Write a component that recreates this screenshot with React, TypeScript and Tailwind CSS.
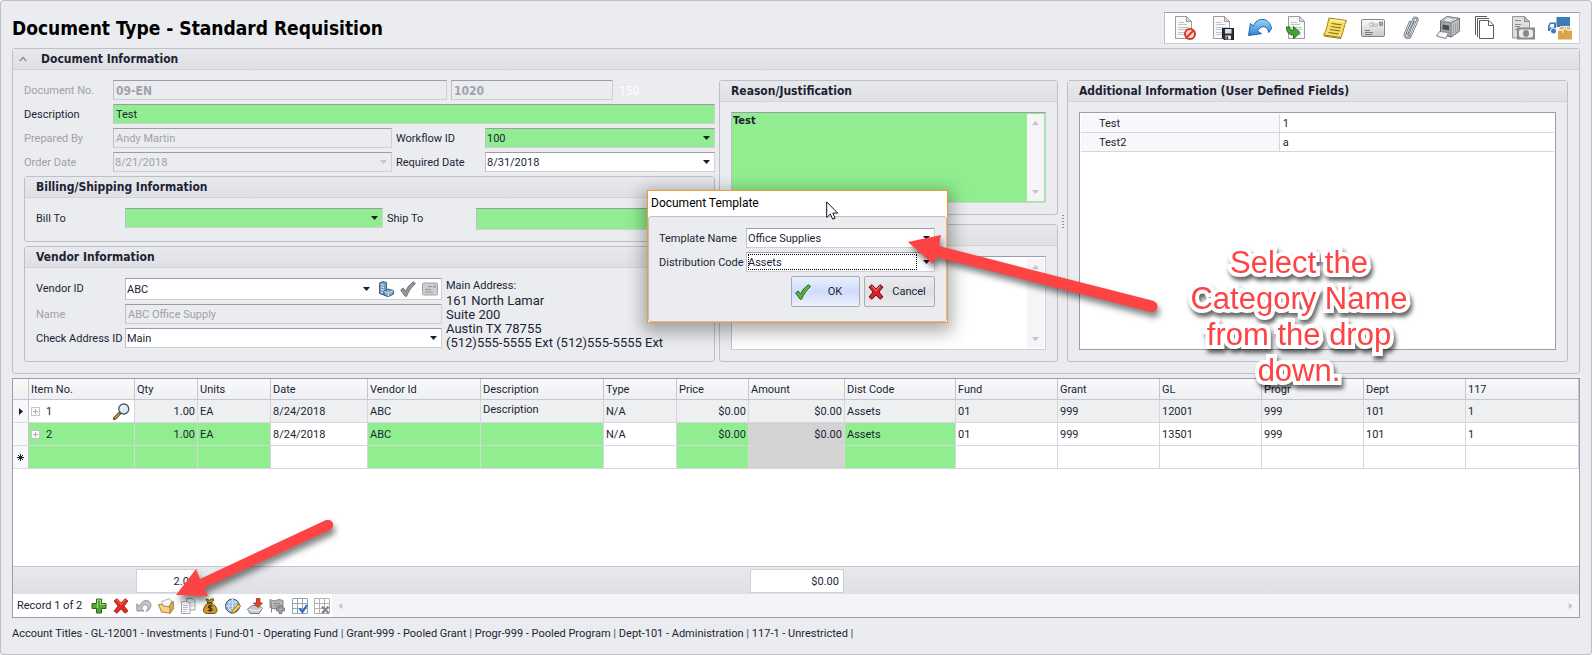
import React from "react";

const edge =
  "border border-t-[#9b9ba9] border-l-[#bfbfc9] border-r-[#cfd0d7] border-b-[#cfd0d7]";
const uiFont = "font-['Tahoma','Roboto','Noto_Sans',sans-serif]";
const boldFont = "font-['Tahoma','DejaVu_Sans_Condensed','DejaVu_Sans',sans-serif] font-bold";

function Caret({ className = "" }: { className?: string }) {
  return (
    <svg className={className} width="7" height="4" viewBox="0 0 7 4" aria-hidden="true">
      <path d="M0 0h7L3.5 4z" fill="currentColor" />
    </svg>
  );
}

function Combo({
  id,
  value,
  className = "",
  disabled = false,
  focused = false,
}: {
  id: string;
  value: string;
  className?: string;
  disabled?: boolean;
  focused?: boolean;
}) {
  return (
    <div className={`relative flex ${edge} ${className}`}>
      <select
        id={id}
        disabled={disabled}
        defaultValue={value}
        className={`min-w-0 flex-1 appearance-none bg-transparent pl-px pr-4 pt-px outline-none ${
          disabled ? "text-[#a1a1ab] opacity-100" : ""
        }`}
      >
        <option>{value}</option>
      </select>
      {focused && (
        <span className="pointer-events-none absolute inset-y-px left-px right-[17px] border border-dotted border-black" />
      )}
      <Caret
        className={`pointer-events-none absolute right-[4px] top-[7px] ${
          disabled ? "text-[#c4c5cc]" : "text-[#1c1b2e]"
        }`}
      />
    </div>
  );
}

function Panel({
  title,
  className = "",
  children,
}: {
  title: string;
  className?: string;
  children?: React.ReactNode;
}) {
  return (
    <section className={`flex flex-col rounded-[3px] border border-[#bebfc7] ${className}`}>
      <h2
        className={`h-[21px] shrink-0 border-b border-[#d3d4d9] bg-linear-to-b from-[#e8e9ec] to-[#dfe0e4] pl-[11px] text-[12px] leading-[21px] ${boldFont}`}
      >
        {title}
      </h2>
      {children}
    </section>
  );
}

/* ---------- toolbar icons (24px) ---------- */

function Sheet({ children }: { children?: React.ReactNode }) {
  return (
    <svg width="24" height="24" viewBox="0 0 24 24" aria-hidden="true">
      <path d="M2.5.5h11l5 5v17h-16z" fill="#f8f8f8" stroke="#9c9c9c" />
      <path d="M13.5.5v5h5z" fill="#dcdcdc" stroke="#9c9c9c" strokeLinejoin="round" />
      <path d="M5 6.5h6M5 8.5h9M5 11.500h11M5 13.500h11M5 16.500h8M5 18.500h10" stroke="#c3c3c3" />
      {children}
    </svg>
  );
}

const toolbarIcons: { name: string; icon: React.ReactNode }[] = [
  {
    name: "Void",
    icon: (
      <Sheet>
        <circle cx="17" cy="18" r="5" fill="#f6dcd8" stroke="#d93526" strokeWidth="2" />
        <path d="M13.500 21.500l7-7" stroke="#d93526" strokeWidth="2" />
      </Sheet>
    ),
  },
  {
    name: "Save",
    icon: (
      <Sheet>
        <path d="M11.500 12.500h11v11h-9.500l-1.500-1.500z" fill="#2b2e35" stroke="#16181d" />
        <path d="M14 13h6.500v4.500H14z" fill="#cfe0f2" />
        <path d="M14.500 19.500h5.500v4h-5.500z" fill="#e8e8e8" />
        <path d="M15.500 20.500h1.500v3h-1.500z" fill="#222" />
      </Sheet>
    ),
  },
  {
    name: "Undo",
    icon: (
      <svg width="24" height="24" viewBox="0 0 24 24" aria-hidden="true">
        <defs>
          <linearGradient id="undoBlue" x1="0" y1="0" x2="0" y2="1">
            <stop offset="0" stopColor="#9ad2f7" />
            <stop offset="1" stopColor="#2c86d0" />
          </linearGradient>
        </defs>
        <path
          d="M2.500 7.500L.500 19.500l13-1.800-4-2.700c1.800-3.200 4.800-5.200 7.500-4 2.200 1 3.300 2.800 3.700 5.500l2.800-3.800c-.5-4.500-3.500-9-8.500-9.300-4.500-.2-8 2.500-9.800 6.600z"
          fill="url(#undoBlue)"
          stroke="#1f64a6"
          strokeLinejoin="round"
        />
      </svg>
    ),
  },
  {
    name: "Submit",
    icon: (
      <Sheet>
        <path
          d="M.5 11c-.2 5 2.500 8 7 8v4l6.500-6.500-6.500-6v4C5 14.500 3.500 13.500 4 11z"
          fill="#3fa535"
          stroke="#22711c"
          strokeLinejoin="round"
        />
      </Sheet>
    ),
  },
  {
    name: "Notes",
    icon: (
      <svg width="24" height="24" viewBox="0 0 24 24" aria-hidden="true">
        <path d="M6 2l17.500 2.500C21 9 20.500 16 18 21.500L.5 19C4 14 4.500 7 6 2z" fill="#f7df63" stroke="#a48117" />
        <path d="M7.500 3.800l14 2" stroke="#fdf3b0" strokeWidth="1.500" />
        <path
          d="M8.500 7.500l10 1.400M7.800 10.500l10 1.400M6.800 13.500l10 1.400M5.500 16.500l10 1.400"
          stroke="#8b7325"
          strokeWidth="1.200"
        />
        <path d="M1 20l17 2.500" stroke="#8f7219" />
      </svg>
    ),
  },
  {
    name: "Email",
    icon: (
      <svg width="24" height="24" viewBox="0 0 24 24" aria-hidden="true">
        <defs>
          <linearGradient id="mailGray" x1="0" y1="0" x2="0" y2="1">
            <stop offset="0" stopColor="#fafafa" />
            <stop offset="1" stopColor="#c9c9c9" />
          </linearGradient>
        </defs>
        <rect x=".5" y="3.500" width="23" height="17" rx="1.500" fill="url(#mailGray)" stroke="#858585" />
        <circle cx="10.500" cy="8.500" r="2" fill="none" stroke="#a5a5a5" strokeWidth=".8" />
        <path d="M11 8c2-1 3 1 6 0M11 10c2-1 3 1 6 0" stroke="#a0a0a0" strokeWidth=".7" fill="none" />
        <rect x="18.500" y="6" width="3" height="3.500" fill="#b8ac7d" stroke="#777" strokeWidth=".7" />
        <path d="M4 14.500h5M4 16.500h8M4 18.500h7" stroke="#6d6d6d" strokeWidth=".9" />
      </svg>
    ),
  },
  {
    name: "Attachments",
    icon: (
      <svg width="24" height="24" viewBox="0 0 24 24" fill="none" strokeLinecap="round" aria-hidden="true">
        <g stroke="#6c747d" strokeWidth="2.400">
          <path d="M17 6l-5 11.500c-.8 1.800-3.200.8-2.500-1L15.500 3c1-2.200 4.800-1 3.800 1.500L12.500 20c-1.500 3.300-6.800 1.500-5.500-2L12 6" />
        </g>
        <g stroke="#dfe4e9" strokeWidth="1">
          <path d="M17 6l-5 11.500c-.8 1.800-3.200.8-2.500-1L15.500 3c1-2.200 4.800-1 3.800 1.500L12.500 20c-1.500 3.300-6.800 1.500-5.500-2L12 6" />
        </g>
      </svg>
    ),
  },
  {
    name: "Print",
    icon: (
      <svg width="24" height="24" viewBox="0 0 24 24" strokeLinejoin="round" aria-hidden="true">
        <path d="M4.500 5L11 .5l12.500 2v12.500l-8.500 6-10.500-3z" fill="#a6a9ac" stroke="#66696c" />
        <path d="M4.500 5L11 .5l12.500 2L15 7z" fill="#dddfe1" stroke="#76797b" strokeWidth=".8" />
        <path d="M15 7l8.500-4.500v12.500l-8.500 6z" fill="#c0c2c5" stroke="#6c6f72" strokeWidth=".8" />
        <path d="M6.500 8.500l6.500 1v5l-6.500-1.200z" fill="#4a4e52" />
        <path d="M7 4.500l5-2.500 6 1-4.500 2.500z" fill="#f7f7f7" stroke="#999" strokeWidth=".5" />
        <path d="M3.500 15.500l9 1-2.500 6-9.500-2.500z" fill="#f8f8f8" stroke="#808284" />
        <path d="M17.500 8.500v9M19.500 7.500v9M21.500 6.500v9" stroke="#8d9093" strokeWidth=".7" />
        <circle cx="7.500" cy="7" r=".8" fill="#5fb04a" />
      </svg>
    ),
  },
  {
    name: "Copy",
    icon: (
      <svg width="24" height="24" viewBox="0 0 24 24" fill="none" stroke="#5b5b5b" aria-hidden="true">
        <path d="M2.500 19V.500H14M4.500 21V2.500H16" />
        <path d="M6.500 4.500h9.500l4.500 4.500v13.500h-14z" fill="#fff" />
        <path d="M15.500 4.500v5h5" />
      </svg>
    ),
  },
  {
    name: "Payments",
    icon: (
      <svg width="24" height="24" viewBox="0 0 24 24" aria-hidden="true">
        <path d="M1.500.500h12l5 5v16.500h-17z" fill="#dedede" stroke="#979797" />
        <path d="M13.500.500v5h5z" fill="#c0c0c0" stroke="#8b8b8b" />
        <path d="M4 4.500h6M4 8.500h6M4 10.500h5M4 13.500h3" stroke="#8b8b8b" strokeWidth="1.200" />
        <rect x="6.500" y="12" width="17" height="11" fill="#8f8f8f" stroke="#858585" />
        <path d="M9.500 13.500h11l1.500 1.500v5l-1.500 1.500h-11L8 20v-5z" fill="#ececec" />
        <ellipse cx="15" cy="17.500" rx="3" ry="3.400" fill="#8a8a8a" />
      </svg>
    ),
  },
  {
    name: "Receiving",
    icon: (
      <svg width="24" height="24" viewBox="0 0 24 24" aria-hidden="true">
        <path d="M8.500 1h13.500v10h-13.500z" fill="#3d7ab8" />
        <path d="M2 6.500h6v8.500H0V10z" fill="#3d7ab8" />
        <path d="M2.700 8h3.300v3.500H1.300z" fill="#fff" />
        <circle cx="5.500" cy="15" r="3" fill="#3d7ab8" stroke="#fff" />
        <path d="M12.500 10.500h9l2.500 3.500H10z" fill="#e3b05c" stroke="#fff" strokeWidth=".8" />
        <path d="M10 14h14v9.500H10z" fill="#d9a44a" />
        <path d="M10 14.300h5M19 14.300h5M17 10.500l-2 4v2.500M18.500 10.500v3" fill="none" stroke="#fff" strokeWidth=".9" />
      </svg>
    ),
  },
];

/* ---------- navigator icons (16px) ---------- */

const svg16 = { width: 16, height: 16, viewBox: "0 0 16 16", "aria-hidden": true } as const;

const crossPath = "M1 3l3-2.300 4 4.300L12 .7 15 3l-4 5 4 5-3 2.300-4-4.300-4 4.300L1 13l4-5z";

function GridGlyph({ color, children }: { color: string; children?: React.ReactNode }) {
  return (
    <svg {...svg16}>
      <path d="M.500.500h15v15H.500z" fill="#fff" />
      <path d="M.500.500h15v15H.500zM5.500.500v15M10.500.500v15M.500 5.500h15M.500 10.500h15" fill="none" stroke={color} />
      {children}
    </svg>
  );
}

const navIcons: { name: string; icon: React.ReactNode }[] = [
  {
    name: "Add item",
    icon: (
      <svg {...svg16}>
        <path d="M5.500 1h5v4.500H15v5h-4.500V15h-5v-4.500H1v-5h4.500z" fill="#57a536" stroke="#2c6b16" />
        <path d="M6.500 10V2h3v4.500H14" fill="none" stroke="#a4d98a" />
      </svg>
    ),
  },
  {
    name: "Delete item",
    icon: (
      <svg {...svg16}>
        <path d={crossPath} fill="#e02b22" stroke="#a51912" strokeWidth=".8" />
        <path d="M4 2l4 4.500L12 2" fill="none" stroke="#f28b84" strokeWidth=".8" />
      </svg>
    ),
  },
  {
    name: "Undo change",
    icon: (
      <svg {...svg16}>
        <path
          d="M.700 6l.300 7h7l-2.300-2.500C6.500 7.500 9 5.700 11 7.500c1.500 1.500 1 4-1 6 4.500-1.500 6.200-6 4-9.200C11.500 1 6.500 2 3.500 8z"
          fill="#c4c4c4"
          stroke="#8b8b8b"
          strokeWidth=".9"
          strokeLinejoin="round"
        />
      </svg>
    ),
  },
  {
    name: "Open template",
    icon: (
      <svg {...svg16}>
        <path d="M3.500 3.500L11 .700l3.500 2.800L13 13l-7-3z" fill="#f4f6fa" stroke="#9aa3b0" strokeWidth=".8" />
        <path d="M13.500 4l1.800-.5V11l-3.300 4.300-1-6.300z" fill="#e2ac55" stroke="#8f621c" strokeWidth=".8" />
        <path d="M.500 6.500l3.500-.3 1.500 1.800 6.500 1v6.300L3.500 14z" fill="#f6d184" stroke="#a9752a" strokeWidth=".9" strokeLinejoin="round" />
      </svg>
    ),
  },
  {
    name: "Copy item",
    icon: (
      <svg {...svg16}>
        <path d="M6.500.500h6l2.500 2.500v9h-8.500z" fill="#f4f4f4" stroke="#a3a7ad" />
        <path d="M1.500 3.500h6L10 6v9.500H1.500z" fill="#fafafa" stroke="#a3a7ad" />
        <path d="M3 7.500h5M3 9.500h5M3 11.500h5M3 13.500h3M9 4.500h4M11 7.500h2.500" stroke="#b9bdc4" />
      </svg>
    ),
  },
  {
    name: "Budget",
    icon: (
      <svg {...svg16}>
        <path d="M4 1l3.500 1.200L11 .5l.8 1.500L9.500 5c3 1.500 5.500 4.500 5.500 7.500 0 2-1.500 3-4 3H5.500c-3 0-4-1.500-4-3C1.500 9.500 3.500 6.500 6 5z" fill="#c99b2a" stroke="#6e4e0c" />
        <path d="M5.500 5h4.500" stroke="#503708" strokeWidth="1.300" />
        <path d="M10.200 8.300c-1-1.200-4-.9-3.900.7.100 1.500 4 .9 4 2.500 0 1.500-3 1.800-4.200.4M8.200 6.800v7" fill="none" stroke="#3c2a05" strokeWidth="1.100" />
      </svg>
    ),
  },
  {
    name: "Web catalog",
    icon: (
      <svg {...svg16}>
        <circle cx="7.500" cy="8" r="7" fill="#8fb6da" stroke="#33516e" />
        <path d="M7.500 1v14M.500 8h14M3 3.500c3 2 6 2 9 0M3 12.500c3-2 6-2 9 0M7.500 1c-5 4-5 10 0 14 5-4 5-10 0-14" fill="none" stroke="#e6f0f8" strokeWidth=".8" />
        <path d="M6.500 15.500l1-3.500 6-6 2.300 2.300-6 6z" fill="#f4c742" stroke="#7c5c10" strokeWidth=".8" />
      </svg>
    ),
  },
  {
    name: "Import",
    icon: (
      <svg {...svg16}>
        <path d="M.500 11l5-3.500h6l4 2.500-3.500 5.500H3z" fill="#c4cad2" stroke="#6a7480" strokeWidth=".9" />
        <path d="M1.500 11.500l9.500 1.500 4-3" fill="none" stroke="#f4f6f8" />
        <path d="M9.500.500h3.500v4.500h2.500L11 9.500 6.500 5h3z" fill="#df4a2c" stroke="#97230f" strokeWidth=".8" />
      </svg>
    ),
  },
  {
    name: "Add project",
    icon: (
      <svg {...svg16}>
        <path d="M1 1.500l4 1.500 5-1.500 4 1v8l-4-1-5 1.500-4-1.500z" fill="#b5b5b5" stroke="#858585" />
        <path d="M2.500 4.500v10M5 5.500h6M5 8h6" stroke="#8b8b8b" />
        <path d="M10 7.500h3v2.500h2.500v3H13v2.500h-3V13H7.500v-3H10z" fill="#a2a2a2" stroke="#6f6f6f" strokeWidth=".8" />
      </svg>
    ),
  },
  {
    name: "Select all",
    icon: (
      <GridGlyph color="#95a3b4">
        <path d="M7.500 10.500l3 3.500L15 7" fill="none" stroke="#2b6fb8" strokeWidth="2.200" />
      </GridGlyph>
    ),
  },
  {
    name: "Clear selection",
    icon: (
      <GridGlyph color="#b1b1b1">
        <path d="M8 8.500l6.500 6.500M14.500 8.500L8 15" fill="none" stroke="#828282" strokeWidth="2" />
      </GridGlyph>
    ),
  },
];

function CheckGlyph({ fill, stroke }: { fill: string; stroke: string }) {
  return (
    <svg {...svg16} className="shrink-0">
      <path d="M.700 9l2.500-2 2.300 3.200C7.500 6 10 3 13.500.800l2 1.700C11.500 6 8.500 10.500 6.500 15.300H5.200z" fill={fill} stroke={stroke} strokeLinejoin="round" />
    </svg>
  );
}

function ScrollStub() {
  return (
    <div className="mr-px flex w-[17px] shrink-0 flex-col items-center justify-between bg-[#f5f5f7] py-[7px] text-[#c3c4ca]">
      <Caret className="rotate-180" />
      <Caret />
    </div>
  );
}

/* ---------- line item grid ---------- */

const columns = [
  { name: "Item No.", width: "w-[106px]" },
  { name: "Qty", width: "w-[63px]" },
  { name: "Units", width: "w-[73px]" },
  { name: "Date", width: "w-[97px]" },
  { name: "Vendor Id", width: "w-[113px]" },
  { name: "Description", width: "w-[123px]" },
  { name: "Type", width: "w-[73px]" },
  { name: "Price", width: "w-[72px]" },
  { name: "Amount", width: "w-[96px]" },
  { name: "Dist Code", width: "w-[111px]" },
  { name: "Fund", width: "w-[102px]" },
  { name: "Grant", width: "w-[102px]" },
  { name: "GL", width: "w-[102px]" },
  { name: "Progr", width: "w-[102px]" },
  { name: "Dept", width: "w-[102px]" },
  { name: "117", width: "" },
];

const rows = [
  ["1", "1.00", "EA", "8/24/2018", "ABC", "Description", "N/A", "$0.00", "$0.00", "Assets", "01", "999", "12001", "999", "101", "1"],
  ["2", "1.00", "EA", "8/24/2018", "ABC", "", "N/A", "$0.00", "$0.00", "Assets", "01", "999", "13501", "999", "101", "1"],
  ["", "", "", "", "", "", "", "", "", "", "", "", "", "", "", ""],
];

const required = [0, 1, 2, 4, 5, 7, 9];

function cellColor(row: number, col: number) {
  if (row === 0) return col === 0 ? "bg-white" : "bg-[#eeeff1]";
  if (col === 8) return "bg-[#d3d3d3]";
  return required.includes(col) ? "bg-[#90ee90]" : "bg-white";
}

function ItemGrid() {
  return (
    <table className="w-full table-fixed border-separate border-spacing-0">
      <colgroup>
        <col className="w-[16px]" />
        {columns.map((c) => (
          <col key={c.name} className={c.width} />
        ))}
      </colgroup>
      <thead>
        <tr className="h-[21px] bg-linear-to-b from-[#f9f9fb] to-[#eeeff2]">
          <th className="border-b border-r border-[#c6c7ce]" aria-label="Row marker" />
          {columns.map((c) => (
            <th key={c.name} className="border-b border-r border-[#c6c7ce] p-0 pl-[2px] pt-px text-left font-normal">
              {c.name}
            </th>
          ))}
        </tr>
      </thead>
      <tbody>
        {rows.map((row, r) => (
          <tr key={r} className="h-[23px]">
            <td className="border-b border-r border-b-[#dcdde2] border-r-[#c6c7ce] bg-[#f8f8fa] p-0">
              {r === 0 && (
                <svg className="mx-auto" width="4" height="7" viewBox="0 0 4 7" aria-hidden="true">
                  <path d="M0 0v7l4-3.500z" fill="#1c1b2e" />
                </svg>
              )}
              {r === 2 && (
                <svg className="mx-auto" width="7" height="7" viewBox="0 0 7 7" aria-hidden="true">
                  <path d="M3.500 0v7M0 3.500h7M1 1l5 5M6 1L1 6" stroke="#1c1b2e" />
                </svg>
              )}
            </td>
            {row.map((value, c) => (
              <td
                key={c}
                className={`border-b border-r border-[#d6d7dd] p-0 ${cellColor(r, c)} ${
                  c === 1 || c === 7 || c === 8 ? "pr-[2px] text-right" : "pl-[2px]"
                } ${c === 5 ? "pt-[3px] align-top" : c === 0 ? "" : "pt-px"}`}
              >
                {c === 0 && value ? (
                  <div className="flex items-center">
                    <button type="button" aria-label={`Expand item ${value}`}>
                      <svg width="9" height="9" viewBox="0 0 9 9" aria-hidden="true">
                        <path d="M.500.500h8v8h-8z" fill="#fdfdfd" stroke="#c3c4cc" />
                        <path d="M2 4.500h5M4.500 2v5" stroke="#a9aab4" />
                      </svg>
                    </button>
                    <span className="flex-1 pl-[6px] pt-px">{value}</span>
                    {r === 0 && (
                      <button type="button" aria-label="Look up item" className="mr-1">
                        <svg width="17" height="17" viewBox="0 0 17 17" aria-hidden="true">
                          <path d="M1.500 15.500l5-5" stroke="#6f4a22" strokeWidth="3.200" strokeLinecap="round" />
                          <path d="M2 15l4-4" stroke="#c79a62" strokeWidth="1.400" strokeLinecap="round" />
                          <circle cx="10.800" cy="6" r="5" fill="#d8ebf8" stroke="#4a5966" strokeWidth="1.300" />
                          <path d="M7.800 5.500c.5-1.800 2-2.500 3.500-2.500" fill="none" stroke="#fff" strokeWidth="1.300" />
                        </svg>
                      </button>
                    )}
                  </div>
                ) : (
                  value
                )}
              </td>
            ))}
          </tr>
        ))}
      </tbody>
    </table>
  );
}

/* ---------- template dialog ---------- */

function TemplateDialog() {
  const button =
    "flex h-[31px] items-center rounded-[2px] border border-[#a9aab5] pl-[3px]";
  return (
    <div
      role="dialog"
      aria-labelledby="dlg-title"
      className="absolute left-[647px] top-[190px] w-[301px] border border-[#f39a36] bg-white shadow-[0_5px_16px_4px_rgba(0,0,0,0.32)]"
    >
      <h2 id="dlg-title" className="h-[25px] pl-[3px] text-[12px] leading-[25px] text-black">
        Document Template
      </h2>
      <div className="rounded-[3px] border border-[#bebfc7] bg-[#ebecef] pb-[14px] pl-[10px] pr-[11px] pt-[11px]">
        <div className="flex h-5">
          <label htmlFor="tpl-name" className="w-[87px] shrink-0 leading-[22px]">Template Name</label>
          <Combo id="tpl-name" value="Office Supplies" className="flex-1 bg-white" />
        </div>
        <div className="mt-1 flex h-5">
          <label htmlFor="tpl-dist" className="w-[87px] shrink-0 whitespace-nowrap leading-[22px]">Distribution Code</label>
          <Combo id="tpl-dist" value="Assets" focused className="flex-1 bg-white" />
        </div>
        <div className="mt-1 flex justify-end gap-1">
          <button type="button" className={`${button} w-[69px] bg-linear-to-b from-[#e9effe] via-[#cfdcfb] to-[#eef2fe]`}>
            <CheckGlyph fill="#58b63d" stroke="#23611a" />
            <span className="flex-1 text-center">OK</span>
          </button>
          <button type="button" className={`${button} w-[71px] bg-linear-to-b from-[#ededf0] via-[#dedfe4] to-[#ececef]`}>
            <svg {...svg16} className="shrink-0">
              <path d={crossPath} fill="#d4252b" stroke="#6d0f12" />
              <path d="M4 2.200l4 4.300 4-4.300" fill="none" stroke="#f08a8c" />
            </svg>
            <span className="flex-1 text-center">Cancel</span>
          </button>
        </div>
      </div>
    </div>
  );
}

function Annotations() {
  return (
    <>
      <svg
        className="pointer-events-none absolute left-0 top-0 drop-shadow-[2px_5px_3px_rgba(0,0,0,0.5)]"
        width="1200"
        height="640"
        viewBox="0 0 1200 640"
        fill="#fd4344"
        aria-hidden="true"
      >
        <path d="M908 242l33-7-2 11 215 55-3 11-215-55-3 7z" />
        <circle cx="1152" cy="306.500" r="5.500" />
        <path d="M176 595l20-26 4 10 126-59 4 10-126 58 4 8z" />
        <circle cx="328" cy="525" r="5.200" />
      </svg>
      <svg className="pointer-events-none absolute left-[826px] top-[201px]" width="13" height="19" viewBox="0 0 13 19" aria-hidden="true">
        <path d="M.700.900v15.600l3.600-3.500 2.400 5.200 2.400-1-2.300-5.100h4.900z" fill="#fff" stroke="#111" />
      </svg>
      <p className="pointer-events-none absolute left-[1183px] top-[245px] w-[232px] text-center font-['Liberation_Sans',Arial,sans-serif] text-[31px] leading-[36px] text-[#fd4344] [-webkit-text-stroke:8px_white] [paint-order:stroke_fill] [stroke-linejoin:round] drop-shadow-[2px_4px_2px_rgba(0,0,0,0.6)]">
        Select the Category Name from the drop down.
      </p>
    </>
  );
}

/* ---------- page ---------- */

export default function App() {
  const dim = "text-[#a1a1ab]";
  const box = `${edge} min-w-0 bg-transparent pl-[2px] pt-px outline-none`;
  const label = "w-[89px] shrink-0 whitespace-nowrap leading-[22px]";
  return (
    <div
      className={`relative flex min-h-screen flex-col rounded-[4px] bg-[#ebecef] px-3 pt-px text-[11px] leading-[14px] text-[#201f35] shadow-[inset_0_0_0_1px_#bebfc7] ${uiFont}`}
    >
      <header className="flex h-[47px] shrink-0 items-start justify-between pt-[11px]">
        <h1 className={`pt-1 text-[19px] leading-6 text-black ${boldFont}`}>
          Document Type - Standard Requisition
        </h1>
        <nav aria-label="Document actions" className={`flex h-8 w-[416px] items-center justify-between bg-white pl-2 pr-[7px] ${edge}`}>
          {toolbarIcons.map((t) => (
            <button key={t.name} type="button" aria-label={t.name}>
              {t.icon}
            </button>
          ))}
        </nav>
      </header>

      <section className="shrink-0 rounded-[3px] border border-[#bebfc7]">
        <div className="flex h-[21px] items-center border-b border-[#d3d4d9] bg-linear-to-b from-[#e8e9ec] to-[#dfe0e4] pl-[6px]">
          <button type="button" aria-label="Collapse document information">
            <svg width="8" height="6" viewBox="0 0 8 6" fill="none" stroke="#8b8c98" strokeWidth="1.500" aria-hidden="true">
              <path d="M.700 5L4 1.500 7.300 5" />
            </svg>
          </button>
          <h2 className={`pl-[14px] text-[12px] leading-[21px] ${boldFont}`}>Document Information</h2>
        </div>

        <div className="flex px-[11px] pb-[11px] pt-[10px]">
          <div className="flex w-[691px] shrink-0 flex-col gap-1">
            <div className="flex h-5">
              <label htmlFor="doc-no" className={`${label} ${dim}`}>Document No.</label>
              <input id="doc-no" disabled defaultValue="09-EN" className={`${box} ${boldFont} ${dim} w-[334px] text-[12px]`} />
              <input aria-label="Document department" disabled defaultValue="1020" className={`${box} ${boldFont} ${dim} ml-1 w-[162px] text-[12px]`} />
              <span className="pl-[6px] text-[12px] leading-[22px] text-white">150</span>
            </div>
            <div className="flex h-5">
              <label htmlFor="desc" className={label}>Description</label>
              <input id="desc" defaultValue="Test" className={`${edge} min-w-0 flex-1 bg-[#90ee90] pl-[2px] pt-px outline-none`} />
            </div>
            <div className="flex h-5">
              <label htmlFor="prep" className={`${label} ${dim}`}>Prepared By</label>
              <input id="prep" disabled defaultValue="Andy Martin" className={`${box} ${dim} w-[279px]`} />
              <label htmlFor="workflow" className="w-[93px] shrink-0 pl-1 leading-[22px]">Workflow ID</label>
              <Combo id="workflow" value="100" className="flex-1 bg-[#90ee90]" />
            </div>
            <div className="flex h-5">
              <label htmlFor="order" className={`${label} ${dim}`}>Order Date</label>
              <Combo id="order" value="8/21/2018" disabled className="w-[279px]" />
              <label htmlFor="reqd" className="w-[93px] shrink-0 pl-1 leading-[22px]">Required Date</label>
              <Combo id="reqd" value="8/31/2018" className="flex-1 bg-white" />
            </div>

            <Panel title="Billing/Shipping Information">
              <div className="flex px-[11px] pb-[11px] pt-[10px]">
                <label htmlFor="billto" className={label}>Bill To</label>
                <Combo id="billto" value="" className="h-5 w-[258px] bg-[#90ee90]" />
                <label htmlFor="shipto" className="w-[93px] shrink-0 pl-1 leading-[22px]">Ship To</label>
                <Combo id="shipto" value="" className="h-[22px] flex-1 bg-[#90ee90]" />
              </div>
            </Panel>

            <Panel title="Vendor Information">
              <div className="flex px-[11px] pb-[11px] pt-[10px]">
                <div className="flex w-[406px] shrink-0 flex-col gap-1">
                  <div className="flex h-[22px]">
                    <label htmlFor="vendor" className={label}>Vendor ID</label>
                    <div className={`flex flex-1 items-center gap-[6px] bg-white pr-[3px] ${edge}`}>
                      <div className="relative flex flex-1">
                        <select id="vendor" defaultValue="ABC" className="w-full appearance-none bg-transparent pl-px pt-px outline-none">
                          <option>ABC</option>
                        </select>
                        <Caret className="pointer-events-none absolute right-[2px] top-[5px] text-[#1c1b2e]" />
                      </div>
                      <button type="button" aria-label="Vendor record">
                        <svg {...svg16}>
                          <path d="M1.500 2L5 .500l3.500 1V9l-1 5.500-6-2z" fill="#6f9cc2" stroke="#35587a" strokeWidth=".9" />
                          <path d="M3 3.500l3 .5M3 6l3 .5M3 8.500l3 .5M3 11l2 .5" stroke="#dcebf7" />
                          <path d="M6 10.500L10 8l5.500 1.500V13L10 15.800 6 14z" fill="#86aac8" stroke="#2d4d6b" strokeWidth=".9" />
                          <path d="M6 10.500l4.500 1.500 5-2.500M10.500 12v3.500" fill="none" stroke="#dcebf7" strokeWidth=".8" />
                        </svg>
                      </button>
                      <button type="button" aria-label="Verify vendor">
                        <CheckGlyph fill="#969696" stroke="#767676" />
                      </button>
                      <button type="button" aria-label="Email vendor">
                        <svg {...svg16}>
                          <rect x=".500" y="2" width="15" height="12" rx="1.200" fill="#cfcfcf" stroke="#a2a2a2" />
                          <path d="M3 8.500h6M3 11h8M6 5.500h4" stroke="#8f8f8f" strokeWidth=".9" />
                          <path d="M11 4h3v3h-3z" fill="#ababab" />
                        </svg>
                      </button>
                    </div>
                  </div>
                  <div className="flex h-5">
                    <label htmlFor="vname" className={`${label} ${dim}`}>Name</label>
                    <input id="vname" disabled defaultValue="ABC Office Supply" className={`${box} ${dim} flex-1`} />
                  </div>
                  <div className="flex h-5">
                    <label htmlFor="check-addr" className={label}>Check Address ID</label>
                    <Combo id="check-addr" value="Main" className="flex-1 bg-white" />
                  </div>
                </div>
                <div className="pl-1">
                  <p className="h-4 leading-4">Main Address:</p>
                  <address className="whitespace-nowrap text-[13px] leading-[14px] not-italic">
                    161 North Lamar
                    <br />
                    Suite 200
                    <br />
                    Austin TX 78755
                    <br />
                    (512)555-5555 Ext (512)555-5555 Ext
                  </address>
                </div>
              </div>
            </Panel>
          </div>

          <div className="ml-1 flex w-[339px] shrink-0 flex-col gap-[9px]">
            <Panel title="Reason/Justification" className="h-[135px] shrink-0">
              <div className={`mx-[11px] mb-[11px] mt-[10px] flex flex-1 bg-[#90ee90] p-px pr-0 ${edge}`}>
                <textarea
                  aria-label="Reason/Justification"
                  defaultValue="Test"
                  className={`min-w-0 flex-1 resize-none overflow-hidden outline-none ${boldFont}`}
                />
                <ScrollStub />
              </div>
            </Panel>
            <Panel title="" className="flex-1">
              <div className={`mx-[11px] mb-[11px] mt-[10px] flex flex-1 bg-white p-px pr-0 ${edge}`}>
                <textarea aria-label="Comments" className="min-w-0 flex-1 resize-none overflow-hidden outline-none" />
                <ScrollStub />
              </div>
            </Panel>
          </div>

          <div className="flex w-[9px] shrink-0 items-center justify-center">
            <span className="h-[13px] w-[2px] bg-[repeating-linear-gradient(to_bottom,#8f909c_0_1px,transparent_1px_3px)]" />
          </div>

          <Panel title="Additional Information (User Defined Fields)" className="min-w-0 flex-1">
            <div className="mx-[11px] mb-[11px] mt-[10px] flex-1 border border-[#9b9ba9] bg-white p-px">
              <table className="w-full table-fixed border-separate border-spacing-0">
                <colgroup>
                  <col className="w-[42%]" />
                  <col />
                </colgroup>
                <tbody>
                  {[
                    ["Test", "1"],
                    ["Test2", "a"],
                  ].map(([k, v]) => (
                    <tr key={k} className="h-[19px]">
                      <th className="border-b border-r border-[#d6d7dd] bg-[#f8f8fa] p-0 pl-[18px] pt-px text-left font-normal">{k}</th>
                      <td className="border-b border-[#d6d7dd] p-0 pl-[3px] pt-px">{v}</td>
                    </tr>
                  ))}
                </tbody>
              </table>
            </div>
          </Panel>
        </div>
      </section>

      <section className="mt-1 flex flex-1 flex-col border border-[#9b9ba9] bg-white" aria-label="Line items">
        <div className="flex-1">
          <ItemGrid />
        </div>
        <div className="flex h-7 items-center border-t border-[#c6c7ce] bg-linear-to-b from-[#e8e9ec] to-[#dfe0e4]">
          <output aria-label="Total quantity" className="ml-[123px] h-6 w-[62px] border border-[#cfd0d7] bg-white pr-[2px] text-right leading-6">
            2.00
          </output>
          <output aria-label="Total amount" className="ml-[552px] h-6 w-[94px] border border-[#cfd0d7] bg-white pr-1 text-right leading-6">
            $0.00
          </output>
        </div>
        <div className="flex h-[23px] items-center">
          <span className="w-[78px] whitespace-nowrap pl-1 pt-px">Record 1 of 2</span>
          <div className="mr-[2px] flex w-[239px] items-center justify-between">
            {navIcons.map((n) => (
              <button key={n.name} type="button" aria-label={n.name}>
                {n.icon}
              </button>
            ))}
          </div>
          <div className="flex h-full flex-1 items-center justify-between bg-[#f4f4f6] px-[5px] text-[#c3c4ca]">
            <Caret className="rotate-90" />
            <Caret className="-rotate-90" />
          </div>
        </div>
      </section>

      <footer className="h-[37px] shrink-0 whitespace-pre pt-[9px]">
        {[
          "Account Titles - GL-12001 - Investments",
          "Fund-01 - Operating Fund",
          "Grant-999 - Pooled Grant",
          "Progr-999 - Pooled Program",
          "Dept-101 - Administration",
          "117-1 - Unrestricted",
        ].map((t) => (
          <span key={t}>
            {t} <span className="font-bold text-[#35688f]">|</span>{" "}
          </span>
        ))}
      </footer>

      <TemplateDialog />
      <Annotations />
    </div>
  );
}
